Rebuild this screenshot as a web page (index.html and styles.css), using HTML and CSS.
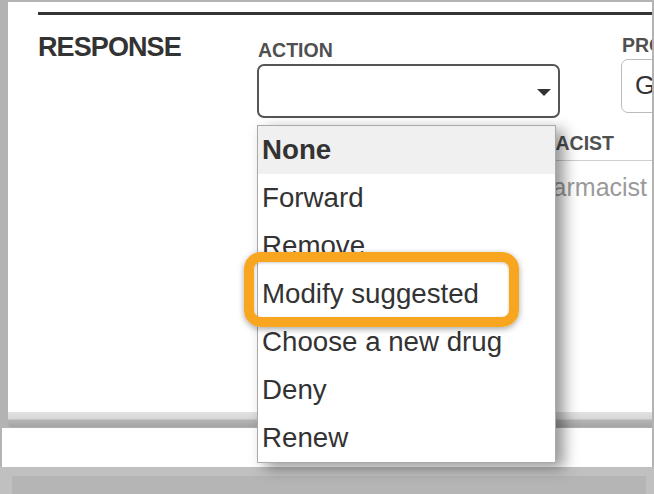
FILE: index.html
```html
<!DOCTYPE html>
<html lang="en">
<head>
<meta charset="utf-8">
<title>Response</title>
<link rel="stylesheet" href="styles.css">
</head>
<body>
<div class="screen">
  <div class="card">
    <div class="content">
      <div class="rule"></div>
      <div class="row1">
        <div class="section-title">RESPONSE</div>
        <div class="field action">
          <div class="label">ACTION</div>
          <div class="select"><span class="caret"></span></div>
        </div>
        <div class="field pro">
          <div class="label pro-label">PROVIDER</div>
          <div class="text-input">Gregory</div>
        </div>
      </div>
      <div class="row2">
        <div class="field pharm">
          <div class="label">PHARMACIST</div>
          <div class="pharm-input">Pharmacist</div>
        </div>
      </div>
    </div>
    <ul class="menu">
      <li class="opt selected">None</li>
      <li class="opt">Forward</li>
      <li class="opt">Remove</li>
      <li class="opt">Modify suggested</li>
      <li class="opt">Choose a new drug</li>
      <li class="opt">Deny</li>
      <li class="opt">Renew</li>
    </ul>
    <div class="highlight"></div>
  </div>
  <div class="card-shadow"></div>
  <div class="band"></div>
  <div class="footer"><div class="footer-inner"></div></div>
</div>
</body>
</html>
```
FILE: styles.css
```css
html, body {
  margin: 0;
  padding: 0;
}
body {
  font-family: "Liberation Sans", Arial, Helvetica, sans-serif;
  background: #b5b5b5;
}
.screen {
  width: 654px;
  height: 494px;
  box-sizing: border-box;
  padding-top: 2px;
  background: #b3b3b3;
  overflow: hidden;
}
.card {
  position: relative;
  margin-left: 8px;
  width: 644px;
  height: 410px;
  background: #fff;
}
.content {
  height: 100%;
  overflow: hidden;
  box-sizing: border-box;
  padding-left: 30px;
  padding-top: 10px;
}
.rule {
  height: 3px;
  background: #333;
}
.row1 {
  display: flex;
  align-items: flex-start;
  margin-top: 19px;
}
.section-title {
  flex: none;
  width: 219px;
  font-size: 27px;
  line-height: 27px;
  font-weight: bold;
  color: #333;
  letter-spacing: -0.9px;
}
.field {
  flex: none;
}
.label {
  font-size: 19.5px;
  line-height: 20px;
  font-weight: bold;
  color: #505050;
  white-space: nowrap;
}
.action .label {
  margin-top: 6px;
  padding-left: 1px;
}
.select {
  margin-top: 4px;
  width: 303px;
  height: 54px;
  box-sizing: border-box;
  border: 2px solid #555;
  border-radius: 7px;
  display: flex;
  align-items: center;
  justify-content: flex-end;
  padding-right: 7px;
}
.caret {
  width: 0;
  height: 0;
  margin-top: 3px;
  border-left: 7px solid transparent;
  border-right: 7px solid transparent;
  border-top: 7px solid #333;
}
.pro {
  margin-left: 61px;
}
.pro-label {
  margin-top: 1px;
  padding-left: 1px;
}
.text-input {
  margin-top: 4px;
  width: 200px;
  height: 54px;
  box-sizing: border-box;
  border: 1.5px solid #bbb;
  border-radius: 7px;
  padding-left: 13px;
  font-size: 26px;
  line-height: 51px;
  color: #333;
}
.row2 {
  display: flex;
  margin-top: 15px;
  padding-left: 446px;
}
.pharm-input {
  margin-top: 7px;
  width: 240px;
  height: 300px;
  box-sizing: border-box;
  border: 1.5px solid #cfcfcf;
  border-radius: 6px;
  padding-left: 37px;
  padding-top: 14px;
  font-size: 25px;
  line-height: 25px;
  color: #9a9a9a;
}
.menu {
  position: absolute;
  left: 249px;
  top: 123px;
  width: 299px;
  margin: 0;
  padding: 0;
  list-style: none;
  box-sizing: border-box;
  background: #fff;
  border: 1px solid #aaa;
  box-shadow: 8px 5px 14px rgba(0, 0, 0, 0.42);
  z-index: 2;
}
.opt {
  height: 48px;
  line-height: 48px;
  padding-left: 4px;
  font-size: 27.7px;
  color: #333;
  white-space: nowrap;
}
.opt.selected {
  background: #f0f0f0;
  font-weight: bold;
}
.highlight {
  position: absolute;
  left: 236px;
  top: 250px;
  width: 275px;
  height: 75px;
  box-sizing: border-box;
  border: 10px solid #f8a51f;
  border-radius: 17px;
  box-shadow: 0 2px 6px rgba(0, 0, 0, 0.35), inset 0 1px 3px rgba(0, 0, 0, 0.2);
  z-index: 3;
}
.card-shadow {
  margin-left: 8px;
  width: 644px;
  height: 16px;
  border-bottom-left-radius: 5px;
  background: linear-gradient(#e2e2e2 0, #d6d6d6 7px, #b4b4b4 8px, #a4a4a4 15px, #b8b8b8 16px);
}
.band {
  margin-left: 2px;
  width: 650px;
  height: 39px;
  background: #fff;
}
.footer {
  height: 27px;
  background: #c0c0c0;
  overflow: hidden;
}
.footer-inner {
  margin-left: 12px;
  margin-top: 9px;
  width: 634px;
  height: 18px;
  background: #b5b5b5;
}
```
